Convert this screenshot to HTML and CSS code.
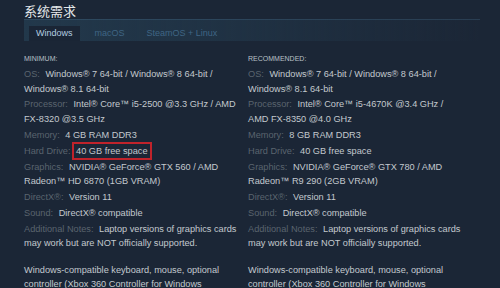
FILE: index.html
```html
<!DOCTYPE html>
<html>

<head>
    <meta charset="utf-8">
    <link rel="stylesheet" href="styles.css">
</head>

<body>
    <div class="sysreq">
        <h2 class="title">系统需求</h2>

        <div class="tabs">
            <span class="tab active">Windows</span>
            <span class="tab">macOS</span>
            <span class="tab">SteamOS + Linux</span>
        </div>

        <div class="cols">
            <div class="col">
                <div class="heading">MINIMUM:</div>
                <ul class="reqs">
                    <li><span class="lbl">OS:</span> Windows® 7 64-bit / Windows® 8 64-bit / Windows® 8.1 64-bit</li>
                    <li><span class="lbl">Processor:</span> Intel® Core™ i5-2500 @3.3 GHz / AMD FX-8320 @3.5 GHz</li>
                    <li><span class="lbl">Memory:</span> 4 GB RAM DDR3</li>
                    <li><span class="lbl">Hard Drive:</span> <span class="marked">40 GB free space</span></li>
                    <li><span class="lbl">Graphics:</span> NVIDIA® GeForce® GTX 560 / AMD Radeon™ HD 6870 (1GB VRAM)</li>
                    <li><span class="lbl">DirectX®:</span> Version 11</li>
                    <li><span class="lbl">Sound:</span> DirectX® compatible</li>
                    <li><span class="lbl">Additional Notes:</span> Laptop versions of graphics cards may work but are NOT officially supported.</li>
                </ul>
                <p class="extra">Windows-compatible keyboard, mouse, optional controller (Xbox 360 Controller for Windows recommended)</p>
            </div>

            <div class="col">
                <div class="heading">RECOMMENDED:</div>
                <ul class="reqs">
                    <li><span class="lbl">OS:</span> Windows® 7 64-bit / Windows® 8 64-bit / Windows® 8.1 64-bit</li>
                    <li><span class="lbl">Processor:</span> Intel® Core™ i5-4670K @3.4 GHz / AMD FX-8350 @4.0 GHz</li>
                    <li><span class="lbl">Memory:</span> 8 GB RAM DDR3</li>
                    <li><span class="lbl">Hard Drive:</span> 40 GB free space</li>
                    <li><span class="lbl">Graphics:</span> NVIDIA® GeForce® GTX 780 / AMD Radeon™ R9 290 (2GB VRAM)</li>
                    <li><span class="lbl">DirectX®:</span> Version 11</li>
                    <li><span class="lbl">Sound:</span> DirectX® compatible</li>
                    <li><span class="lbl">Additional Notes:</span> Laptop versions of graphics cards may work but are NOT officially supported.</li>
                </ul>
                <p class="extra">Windows-compatible keyboard, mouse, optional controller (Xbox 360 Controller for Windows recommended)</p>
            </div>
        </div>
    </div>
</body>

</html>
```

FILE: styles.css
```css
body {
    margin: 0;
    background: #1b2636;
    font-family: "Liberation Sans", Arial, sans-serif;
    overflow: hidden;
}

.sysreq {
    padding: 2px 0 0 24px;
}

.title {
    margin: 0;
    font-family: "Noto Sans CJK SC", sans-serif;
    font-size: 13px;
    font-weight: normal;
    line-height: 17px;
    color: #e4e8eb;
}

.tabs {
    display: flex;
    align-items: flex-end;
    gap: 8px;
    width: 456px;
    height: 22px;
    padding-left: 5px;
    box-sizing: border-box;
    background: linear-gradient(to right, #22384b 0%, rgba(34, 56, 75, 0.6) 50%, rgba(34, 56, 75, 0) 100%);
    border-top: 1px solid rgba(70, 105, 135, 0.35);
}

.tab {
    height: 15px;
    padding: 0 7px;
    font-size: 9px;
    line-height: 15px;
    color: #3f6584;
}

.tab.active {
    background: #1a2535;
    color: #b4cde0;
}

.cols {
    display: grid;
    grid-template-columns: 216px 216px;
    gap: 8px;
    padding-top: 13px;
}

.heading {
    font-size: 7px;
    line-height: 10px;
    color: #b9c0c6;
    margin-bottom: 3px;
}

.reqs {
    list-style: none;
    margin: 0;
    padding: 0;
}

.reqs li,
.extra {
    font-size: 9.2px;
    line-height: 14.5px;
    color: #c3c9ce;
}

.reqs li {
    margin-bottom: 1.4px;
}

.lbl {
    color: #5a646e;
    margin-right: 3px;
}

.marked {
    outline: 2px solid #c0232b;
    outline-offset: 2px;
}

.extra {
    margin: 12px 0 0;
}
```
